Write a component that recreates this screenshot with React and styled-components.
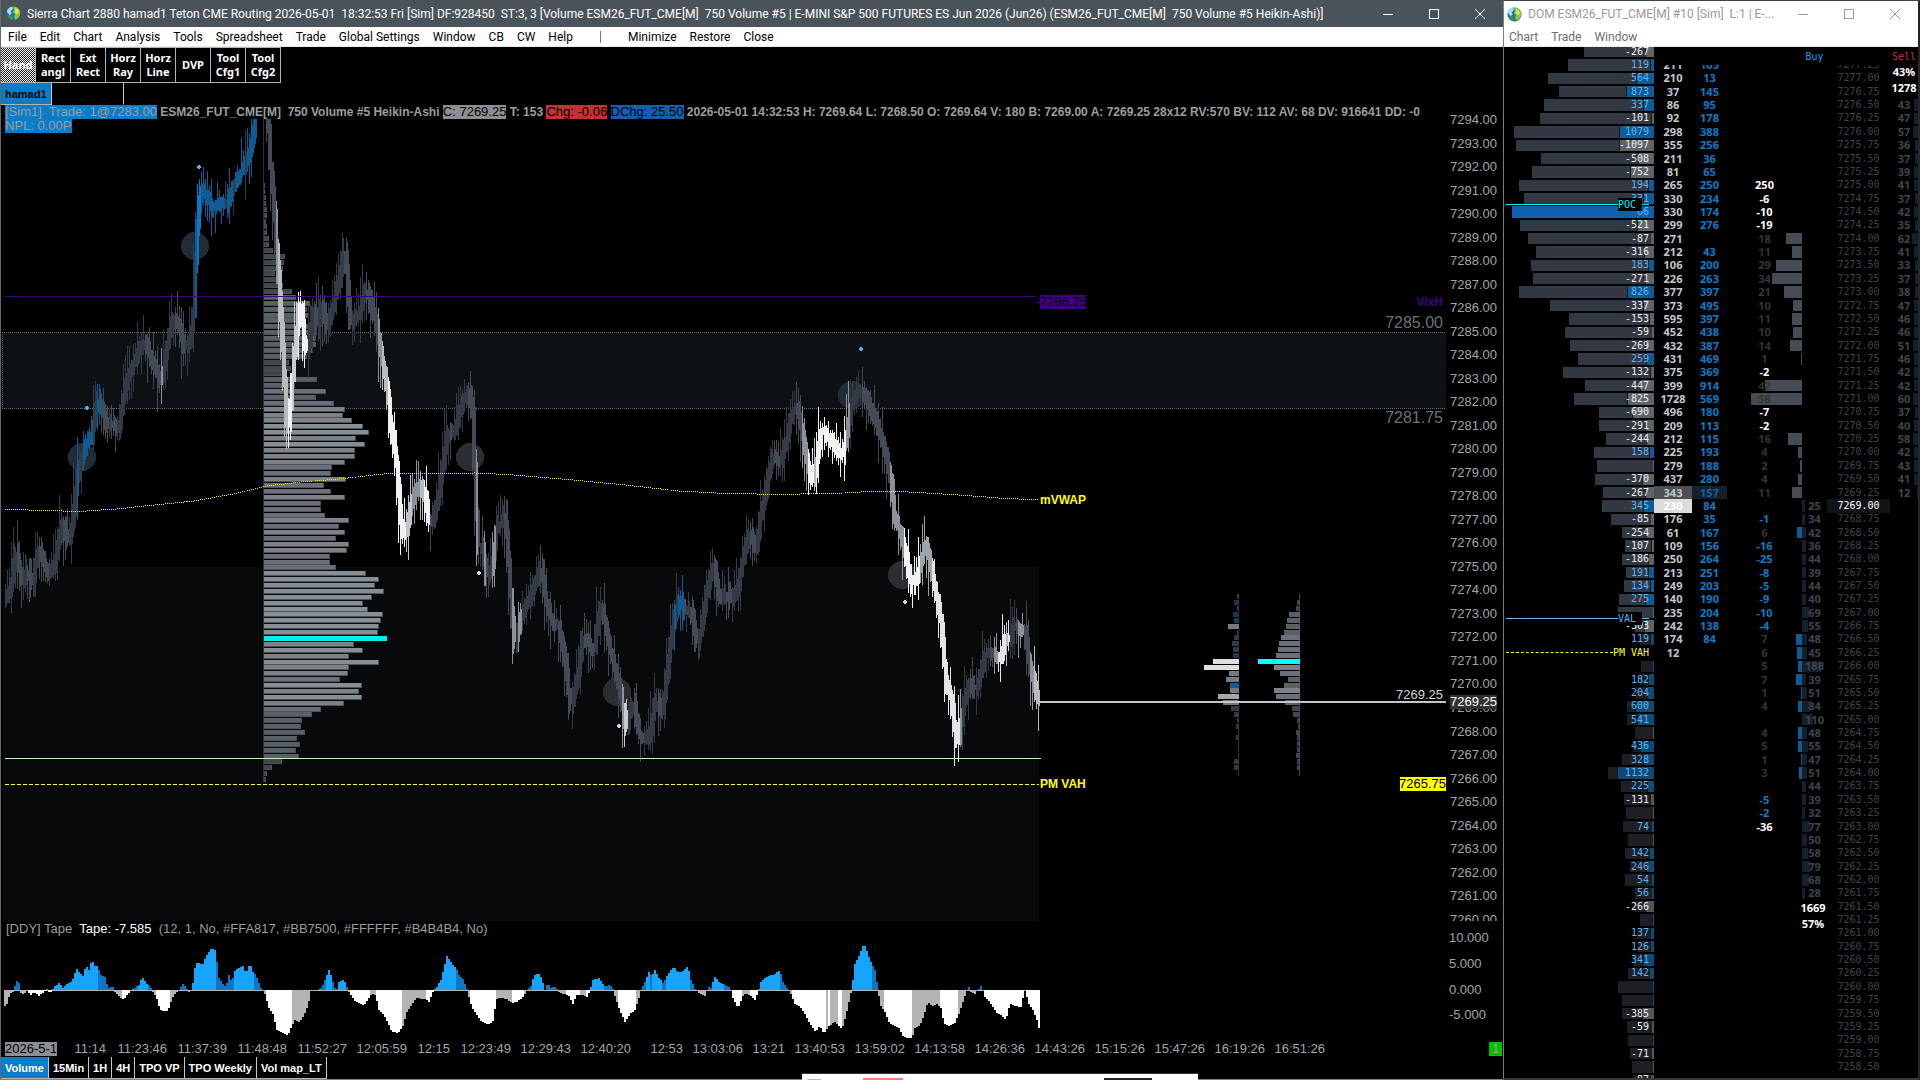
import React from 'react';
import styled, { createGlobalStyle } from 'styled-components';

const GlobalStyle = createGlobalStyle`
    * {
        box-sizing: border-box;
    }
    body {
        margin: 0;
        background: #000;
        overflow: hidden;
    }
    button {
        border: 0;
        margin: 0;
        padding: 0;
        background: none;
        color: inherit;
        font: inherit;
    }
`

const uiFont = '"Noto Sans", "Open Sans", sans-serif';
const titleFont = 'Roboto, "Open Sans", sans-serif';
const chartFont = '"Liberation Sans", Arial, sans-serif';

const Desktop = styled.div`
    display: flex;
    height: 100vh;
    background: #000;
    font-family: ${chartFont};
`

const MainWindow = styled.main`
    flex: 1;
    min-width: 0;
    display: flex;
    flex-direction: column;
    border-left: 1px solid #5f686f;
    border-bottom: 1px solid #7c8288;
`

const DomWindow = styled.aside`
    flex: none;
    width: 417px;
    display: flex;
    flex-direction: column;
    border: 1px solid #6b7076;
    border-width: 1px 2px 2px 1px;
    border-color: #3c444c #23272b #36383a #7a7f84;
`

const TitleBar = styled.header`
    flex: none;
    display: flex;
    align-items: center;
    height: ${({ $light }) => ($light ? 26 : 27)}px;
    padding-left: ${({ $light }) => ($light ? 3 : 5)}px;
    background: ${({ $light }) => ($light ? '#fff' : '#4a5359')};
    color: ${({ $light }) => ($light ? '#999' : '#fff')};
    font: 12px ${titleFont};

    h1 {
        flex: 1;
        min-width: 0;
        margin: 0 0 0 6px;
        font: inherit;
        white-space: pre;
        overflow: hidden;
    }
    svg {
        display: block;
    }
`

const CaptionButton = styled.button`
    display: flex;
    justify-content: center;
    align-items: center;
    width: 46px;
    height: 26px;
`

const MenuBar = styled.nav`
    flex: none;
    display: flex;
    align-items: center;
    height: 20px;
    padding-left: ${({ $light }) => ($light ? 5 : 7)}px;
    gap: 13px;
    background: #fff;
    border-bottom: 1px solid #ececec;
    color: ${({ $light }) => ($light ? '#6a6e78' : '#000')};
    font: 12px ${titleFont};
    line-height: 20px;
`

const MenuDivider = styled.span`
    width: 1px;
    height: 12px;
    margin: 0 14px;
    background: #777;
`

const Toolbar = styled.div`
    flex: none;
    display: flex;
    height: 36px;
`

const ToolButton = styled.button`
    width: 35px;
    border: 1px solid #b4b4b4;
    border-width: 1px 1px 1px 0;
    color: #fff;
    background: ${({ $active }) => ($active
        ? 'repeating-conic-gradient(#fff 0 25%, #202020 0 50%) 0 0 / 2px 2px'
        : '#000')};
    font: bold 11px ${uiFont};
    line-height: 14px;
`

const Tabs = styled.div`
    flex: none;
    display: flex;
    height: 22px;
`

const Tab = styled.button`
    padding: 0 4px;
    border-right: 1px solid #c8c8c8;
    border-bottom: 1px solid ${({ $empty }) => ($empty ? 'transparent' : '#b4b4b4')};
    min-width: ${({ $empty }) => ($empty ? 72 : 21)}px;
    background: ${({ $active }) => ($active ? '#0a7cc8' : '#000')};
    color: ${({ $dark }) => ($dark ? '#000' : '#fff')};
    font: bold 11px ${chartFont};
    white-space: nowrap;
`

const ChartArea = styled.section`
    flex: 1;
    min-height: 0;
    display: flex;
    flex-direction: column;
`

const Pane = styled.div`
    position: relative;
    display: flex;
    flex: ${({ $height }) => ($height ? 'none' : 1)};
    height: ${({ $height }) => ($height ? `${$height}px` : 'auto')};
    min-height: 0;
    overflow: hidden;
`

const Plot = styled.svg`
    flex: 1;
    min-width: 0;
    display: block;
    overflow: hidden;
`

const Scale = styled.svg`
    flex: none;
    width: 57px;
    display: block;
    font: 13px ${chartFont};
    fill: #a2a6aa;
`

const PaneHeader = styled.div`
    position: absolute;
    top: 0;
    left: 0;
    right: 57px;
    padding-left: 4px;
    overflow: hidden;
    background: linear-gradient(#000 14px, transparent 14px);
    color: #9a9ea2;
    font-size: 12px;
    font-weight: bold;
    line-height: 14px;
    white-space: pre;
`

const Tag = styled.span`
    display: inline-block;
    height: 14px;
    background: ${({ $bg }) => $bg};
    color: ${({ $color }) => $color || '#000'};
    font-size: 13px;
    font-weight: normal;
    vertical-align: top;
`

const TapeHeader = styled(PaneHeader)`
    top: 1px;
    padding-left: 5px;
    font-size: 13px;
    font-weight: normal;

    b {
        color: #fff;
        font-weight: normal;
    }
`

const TimeAxis = styled.div`
    flex: none;
    display: flex;
    align-items: center;
    height: 14px;
    margin: 0 1px 1px 4px;
    color: #a2a6aa;
    font-size: 13px;
    line-height: 14px;
`

const TimeLabel = styled.span`
    width: ${({ $w }) => $w}px;
    text-align: right;
`

const PageBadge = styled.span`
    margin-left: auto;
    width: 13px;
    background: #00c000;
    color: #8fae8f;
    text-align: center;
`

const Ladder = styled.section`
    position: relative;
    flex: 1;
    min-height: 0;
    display: flex;
    overflow: hidden;
    background: #000;
`

const Columns = styled.tr`
    flex: 1 1 0;
    min-height: 0;
    display: grid;
    grid-template-columns: 1fr 38px 35px 75px 25px 63px 28px;
`

const LadderTable = styled.table`
    flex: 1;
    display: flex;
    margin: -2px 0 -9px;
    border-spacing: 0;
    font: bold 11px ${uiFont};

    tbody {
        flex: 1;
        display: flex;
        flex-direction: column;
    }
`

const Cell = styled.td`
    position: relative;
    display: flex;
    align-items: center;
    justify-content: center;
    min-width: 0;
    padding: 0;
    line-height: 12px;
    color: ${({ $color }) => $color};
    background: ${({ $bg }) => $bg || 'none'};
    background-clip: content-box;

    span {
        position: relative;
    }
`

const ProfileCell = styled(Cell)`
    justify-content: flex-end;
    padding-right: 5px;
    font: 10px "DejaVu Sans Mono", monospace;
    line-height: 12px;
`

const PriceCell = styled(Cell)`
    font: 10px "DejaVu Sans Mono", monospace;
    line-height: 12px;
`

const Bar = styled.i`
    position: absolute;
    top: 1px;
    bottom: 1px;
    ${({ $side }) => $side || 'right'}: 0;
    width: ${({ $w }) => $w}px;
    background: ${({ $color }) => $color};
    border-left: ${({ $edge }) => ($edge ? '1px solid #15191d' : '0')};
`

const Level = styled.div`
    position: absolute;
    z-index: 2;
    left: 2px;
    right: 5px;
    ${({ $at }) => ($at === 'middle' ? 'top: 0' : 'top: -7px')};
    display: flex;
    align-items: center;
    color: ${({ $color }) => $color};
    line-height: 13px;

    &::before {
        content: '';
        flex: 1;
        border-top: 1px ${({ $dashed }) => ($dashed ? 'dashed' : 'solid')} ${({ $color }) => $color};
    }
    &::after {
        content: '';
        width: ${({ $dashed }) => ($dashed ? 0 : 7)}px;
        border-top: 1px solid ${({ $color }) => $color};
    }
    em {
        min-width: 24px;
        background: #000;
        font-style: normal;
    }
`

const LadderHead = styled.div`
    position: absolute;
    top: 0;
    right: 0;
    width: 264px;
    height: 18px;
    display: grid;
    grid-template-columns: 1fr 25px 63px 28px;
    background: #000;
    font: 10px "DejaVu Sans Mono", monospace;
    line-height: 20px;
    text-align: center;

    .buy {
        color: #1a9af0;
    }
    .sell {
        color: #c83030;
    }
`

const Totals = styled.div`
    position: absolute;
    right: ${({ $right }) => $right}px;
    top: ${({ $top }) => $top}px;
    width: 26px;
    background: #000;
    color: #fff;
    font: bold 11px ${uiFont};
    line-height: 16px;
    text-align: center;
`

const Popup = styled.div`
    position: fixed;
    left: 802px;
    bottom: 0;
    width: 396px;
    height: 7px;
    display: flex;
    align-items: flex-end;
    padding-left: 5px;
    background: #fff;
    border-top: 1px solid #333;
`

const Chip = styled.span`
    width: ${({ $w }) => $w}px;
    height: ${({ $h }) => $h}px;
    margin-right: ${({ $gap }) => $gap}px;
    background: ${({ $color }) => $color};
`

const parse = (text) => text.trim().split(/\s+/).map((pair) => pair.split(',').map(Number));

const pricePath = parse(`
    5,598 10,588 15,548 22,587 27,563 31,590 38,545 44,567 48,577 54,563 62,520 68,547 74,503 76,480
    79,467 86,440 91,438 97,395 104,418 106,430 111,420 118,434 121,408 125,383 131,368 138,350 144,340
    150,357 156,370 160,386 167,343 172,318 178,325 184,350 190,340 194,300 195,260 198,210 200,187
    206,197 213,210 221,203 225,207 230,193 238,177 245,163 250,150 254,123 256,100`);

const pricePath2 = parse(`
    266,100 268,127 270,167 273,200 275,233 278,277 281,333 284,383 286,420 287,438 290,405 292,377
    296,330 299,298 302,325 305,357 309,340 313,300 316,333 321,300 326,330 331,310 337,285 341,265
    344,245 347,280 349,325 354,317 359,313 366,285 371,310 376,325 380,353 384,373 388,400 389,420
    394,450 397,473 399,507 401,537 406,530 410,505 414,493 419,483 424,497 428,517 431,523 436,507
    442,467 447,430 453,437 458,413 463,398 468,392 472,413 474,467 476,517 478,550 481,540 484,560
    486,580 492,563 497,520 501,526 504,507 507,550 511,607 514,650 519,620 523,610 531,593 536,580
    540,565 545,600 553,627 558,623 565,667 570,708 577,677 582,637 588,643 594,650 597,620 601,602
    606,633 612,660 618,683 622,707 625,735 629,710 633,697 637,730 642,742 650,733 655,698 662,713
    666,677 671,633 674,617 679,595 684,613 691,607 696,650 701,627 706,593 713,561 719,603 726,590
    730,603 737,590 743,555 749,531 755,553 760,517 766,487 772,455 779,463 786,440 791,412 797,408
    802,437 807,467 811,485 816,460 820,432 824,433 830,440 836,450 842,457 846,433 850,407 857,392
    862,391 868,404 877,427 884,450 888,467 891,483 893,517 898,527 902,540 906,560 912,590 917,573
    920,563 925,540 929,563 935,590 940,620 943,653 946,687 951,700 954,727 957,750 960,723 964,700
    969,680 974,693 979,680 984,655 990,653 996,657 1001,657 1005,635 1009,645 1013,620 1019,630
    1025,633 1029,667 1034,687 1039,702`);

// colour of the bars up to each x
const barColors = [
    [75, null], [78, '#0e5c96'], [82, null], [92, '#0e5c96'], [95, null], [100, '#0e5c96'], [159, null],
    [161, '#8c9298'], [194, null], [196, '#0e5c96'], [200, '#0a78c8'], [224, '#0e5c96'], [226, null],
    [232, '#0e5c96'], [234, null], [243, '#0e5c96'], [246, null], [258, '#0e5c96'], [274, null],
    [277, '#8c9298'], [283, '#b8bcbe'], [286, '#b8bcbe'], [291, '#f2f2f2'], [296, '#c8ccce'], [306, '#f2f2f2'],
    [377, null], [381, '#8c9298'], [386, '#b8bcbe'], [404, '#f2f2f2'], [411, '#c0c4c6'], [418, '#8c9298'],
    [422, '#b8bcbe'], [429, '#f2f2f2'], [474, null], [477, '#8c9298'], [482, null], [485, '#8c9298'],
    [491, null], [494, '#8c9298'], [510, null], [514, '#8c9298'], [517, null], [520, '#8c9298'],
    [620, null], [623, '#8c9298'], [626, '#c8ccce'], [672, null], [675, '#0e5c96'], [677, null],
    [682, '#0e5c96'], [801, null], [807, '#8c9298'], [812, '#f2f2f2'], [814, '#b8bcbe'], [844, '#f2f2f2'],
    [848, '#8c9298'], [889, null], [902, '#8c9298'], [918, '#f2f2f2'], [930, '#9ea4a8'],
    [958, '#e4e5e6'], [961, '#8c9298'], [992, null], [996, '#8c9298'], [1004, '#e4e5e6'], [1007, '#b8bcbe'],
    [1009, '#e4e5e6'], [1017, null], [1022, '#8c9298'], [1028, null], [1032, '#8c9298'], [1050, '#b8bcbe'],
];

const tapePath = parse(`
    4,-16 6,-14 9,-4 13,-1 14,4 17,11 19,3 20,-3 23,-4 26,-1 30,-5 33,-2 38,-6 42,-3 46,1 49,-4 53,3
    58,7 62,2 66,6 70,8 73,12 75,22 78,18 82,14 85,25 88,20 91,30 94,24 97,24 99,16 104,13 107,2 112,3
    114,-2 118,-6 123,-10 127,-4 130,0 134,2 138,5 141,13 145,7 149,4 152,-2 156,-9 159,-20 163,-21
    167,-21 170,-12 173,-5 178,0 182,6 186,1 189,-3 191,0 194,22 196,27 202,26 205,34 208,38 211,42
    214,40 216,28 218,12 222,6 225,3 228,15 231,8 234,19 238,22 242,24 245,16 249,27 252,18 255,15
    258,7 261,0 264,-4 268,-18 272,-24 276,-40 281,-42 287,-46 290,-38 294,-30 298,-32 303,-26 307,-16
    310,0 315,0 321,2 325,13 328,20 331,13 333,3 336,1 338,8 343,10 346,3 349,-4 353,-10 358,-13
    363,-16 367,-10 371,-3 375,-6 378,-20 382,-24 386,-31 391,-42 397,-43 402,-36 406,-22 411,-14
    416,-8 420,-9 424,-9 428,-12 432,-2 436,3 440,10 443,22 446,34 449,29 452,25 455,22 458,15 462,11
    465,4 467,-3 471,-18 475,-24 481,-32 485,-34 489,-34 493,-30 495,-9 500,-8 506,-9 511,-13 516,-12
    521,-8 526,-1 530,4 533,14 537,17 541,11 544,0 547,7 550,2 554,3 558,-2 563,-4 568,-6 572,-14
    576,-5 581,-5 587,-7 589,0 592,10 598,12 601,7 604,4 609,5 612,1 614,-6 618,-18 624,-32 629,-24
    634,-20 638,-8 641,2 645,10 648,18 651,14 654,20 658,12 662,7 665,12 669,19 673,23 677,18 681,18
    687,24 690,10 694,1 699,-4 705,-7 707,4 710,2 714,13 719,7 724,5 729,2 732,-8 737,-18 742,-6
    745,-3 750,-6 754,-10 757,-2 760,8 764,12 769,15 773,15 779,20 782,8 786,2 789,-2 794,-14 799,-16
    804,-24 809,-34 815,-42 819,-36 823,-44 828,-36 834,-32 841,-39 845,-26 849,-8 851,2 854,26 859,36
    863,47 867,36 870,28 874,20 877,2 879,-15 884,-22 888,-32 893,-36 898,-38 902,-46 906,-48 911,-48
    914,-38 919,-36 923,-26 927,-12 931,-16 936,-14 940,-18 943,-33 948,-36 954,-33 958,-24 962,-12
    966,-1 967,5 970,-2 974,-4 978,1 981,5 983,-6 989,-12 995,-22 1000,-25 1005,-30 1009,-14 1014,-16
    1020,-17 1024,0 1028,-14 1032,-20 1036,-30 1038,-38`);

const fadedTape = [
    [4, 28], [98, 122], [134, 138], [147, 155], [169, 192], [216, 233], [253, 266], [292, 325], [332, 338],
    [346, 350], [370, 376], [402, 426], [456, 470], [495, 511], [524, 532], [543, 566], [580, 586],
    [604, 617], [636, 646], [650, 652], [662, 665], [690, 712], [724, 732], [741, 750], [779, 792],
    [826, 828], [830, 837], [842, 851], [872, 883], [912, 940], [957, 983],
];

const vwap = `5,509 29,510 63,511 87,511 116,509 145,506 194,501 233,494 267,486 301,482 339,479 383,474
    402,473 422,474 475,473 514,475 562,479 625,485 679,491 717,493 756,494 800,494 844,493 879,491
    909,492 959,495 999,498 1038,500`;

const volumeProfile = [
    0, 0, 1, 1, 2, 2, 1, 2, 2, 4, 4, 8, 20, 19, 18, 10, 13, 18, 27, 31, 45, 42, 43, 41, 43, 52, 50, 51, 48, 42,
    24, 26, 22, 52, 30, 61, 51, 69, 80, 78, 87, 98, 104, 91, 100, 90, 90, 80, 67, 66, 81, 59, 66, 80, 56, 56,
    60, 84, 74, 80, 71, 84, 82, 65, 65, 71, 101, 114, 110, 119, 107, 98, 103, 118, 116, 114, 113, 122, 89, 98,
    84, 114, 84, 83, 75, 97, 94, 97, 79, 56, 47, 37, 36, 40, 32, 35, 31, 34, 17, 7, 2, 1,
];

const sessionProfile = [
    1, 3, 4, 11, 13, 14, 16, 19, 21, 22, 24, 42, 26, 20, 12, 16, 26, 24, 15, 8, 7, 3, 2, 4, 3, 3, 3, 4, 3, 3, 1,
];

const deltaProfile = [
    [2], [5, 'b'], [2], [6, 'b'], [5, 'b'], [11, 'g'], [2], [5], [7], [6], [6, 'b'], [26, 'w'], [35, 'w'],
    [10, 'g'], [13, 'g'], [9, 'B'], [9, 'g'], [21, 'l'], [16, 'g'], [8], [5], [2], [3], [1], [3], [1], [1],
    [1], [5], [5], [1],
];

const deltaColors = { b: '#153a58', g: '#737981', w: '#dedfe0', B: '#0e5c96', l: '#a4a6a8' };

const zones = [[82, 457], [195, 246], [470, 457], [617, 692], [852, 395], [902, 575]];
const marks = [[87, 408, 1], [199, 167, 1], [861, 349, 1], [479, 573], [619, 726], [905, 602]];

const tick = 588 / 100;
const priceY = (price) => 119 + (7294 - price) * 4 * tick;

const at = (path, x) => {
    const i = path.findIndex(([px]) => px >= x);
    if (i === -1) return path[path.length - 1][1];
    if (i === 0) return path[0][1];
    const [x0, y0] = path[i - 1];
    const [x1, y1] = path[i];
    return y0 + ((y1 - y0) * (x - x0)) / (x1 - x0);
}

const noise = (n) => {
    const v = Math.sin(n * 127.1) * 43758.5453;
    return v - Math.floor(v);
}

function PriceBars({ path }) {
    const from = path[0][0];
    const to = path[path.length - 1][0];
    const bars = [];
    for (let x = from; x <= to; x += 2) {
        const a = at(path, x - 2);
        const b = at(path, x + 2);
        const top = Math.round(Math.min(a, b) - 2 - noise(x) * 6);
        const bottom = Math.round(Math.max(a, b) + 2 + noise(x + 0.5) * 6);
        const high = Math.round(top - noise(x + 7) ** 1.5 * 25);
        const low = Math.round(bottom + noise(x + 3) ** 1.5 * 25);
        const dark = a > b ? '#343b46' : '#444a56';
        const color = (barColors.find(([limit]) => x <= limit) || [])[1] || dark;
        bars.push(
            <g key={x} fill={color}>
                <rect x={x} y={high} width="1" height={low - high} />
                <rect x={x} y={top} width="2" height={bottom - top} />
            </g>
        );
    }
    return <g>{bars}</g>
}

const profileColor = (w) => {
    if (w > 96) return '#878f96';
    if (w > 76) return '#7c8286';
    if (w > 55) return '#6b6f7c';
    if (w > 28) return '#5a6166';
    return '#40464c';
}

function PricePlot() {
    return (
        <Plot shapeRendering="crispEdges" fontFamily={chartFont} role="img" aria-label="ESM26 price chart">
            <g transform="translate(-1 -105)">
                <rect x="3" y="567" width="1036" height="400" fill="#08090b" />
            </g>
            <g transform="translate(0 -105)">
                <rect x="1" y="332" width="100%" height="76" fill="#0d1114" />
                <path d="M1.5 332V408" stroke="#6a6e78" strokeDasharray="1 1" />
                <line x1="1" x2="100%" y1="332.5" y2="332.5" stroke="#6a6e78" strokeDasharray="1 1" />
                <line x1="1" x2="100%" y1="408.5" y2="408.5" stroke="#6a6e78" strokeDasharray="1 1" />
            </g>
            <g transform="translate(-1 -105)">
                <rect x="263" y="119" width="1" height="664" fill="#2c3034" />
                {volumeProfile.map((w, i) => {
                    const y = Math.round(638 + (i - 77) * tick - 2);
                    const poc = i === 77;
                    return (
                        <g key={i}>
                            <rect x="264" y={y} width={w + 1} height="5" fill={poc ? '#00f0f0' : '#4c5258'} />
                            <rect x="264" y={y} width={w} height="4" fill={poc ? '#00f0f0' : profileColor(w)} />
                        </g>
                    );
                })}
                {zones.map(([x, y]) => (
                    <circle key={x} cx={x} cy={y} r="14" fill={x < 200 || x === 852 ? '#222b36' : '#2b2d30'} />
                ))}
                <PriceBars path={pricePath} />
                <PriceBars path={pricePath2} />
                {marks.map(([x, y, up]) => (
                    <path key={x} d={`M${x - 2} ${y - 1}h1v-1h2v1h1v2h-1v1h-2v-1h-1z`} fill={up ? '#5ab4f5' : '#d8d8d8'} />
                ))}
                <rect x="5" y="296" width="1030" height="1" fill="#43007e" />
                <polyline points={vwap} fill="none" stroke="#f0f000" strokeDasharray="1 1" />
                <rect x="5" y="758" width="1036" height="1" fill="#b8f8b8" />
                <line x1="5" x2="1039" y1="784.5" y2="784.5" stroke="#ffff00" strokeDasharray="4 2" />
                {deltaProfile.map(([w, c], i) => (
                    <rect key={i} x={1239 - w} y={Math.round(662 + (i - 11) * tick) - 3} width={w} height="5" fill={deltaColors[c] || '#333a44'} />
                ))}
                <rect x="1299" y="594" width="1" height="181" fill="#3c4248" />
                {sessionProfile.map((w, i) => (
                    <rect key={i} x={1300 - w} y={Math.round(662 + (i - 11) * tick) - 3} width={w} height="5" fill={i === 11 ? '#00ffff' : profileColor(w * 3)} />
                ))}
                <rect x="1036" y="302" width="4" height="1" fill="#43007e" />
                <rect x="1040" y="295" width="46" height="14" fill="#43007e" />
                <text x="1040" y="306" fontSize="13">7286.25</text>
                <g fill="#ffff00" fontSize="12" fontWeight="bold">
                    <text x="1040" y="504">mVWAP</text>
                    <text x="1040" y="788">PM VAH</text>
                </g>
            </g>
            <g transform="translate(0 -105)" textAnchor="end" fontSize="13">
                <svg x="1038" y="0" width="100%" height="1000">
                    <rect y="701" width="100%" height="2" fill="#c4c6c8" />
                </svg>
                <text x="100%" dx="-3" y="306" fill="#43007e" fontSize="12" fontWeight="bold">VixH</text>
                <text x="100%" dx="-3" y="328" fill="#6c7078" fontSize="16">7285.00</text>
                <text x="100%" dx="-3" y="423" fill="#6c7078" fontSize="16">7281.75</text>
                <text x="100%" dx="-3" y="699" fill="#d0d2d4">7269.25</text>
                <svg x="100%" y="777" width="46" height="14" overflow="visible">
                    <rect x="-46" width="46" height="14" fill="#ffff00" />
                    <text y="11" fill="#000">7265.75</text>
                </svg>
            </g>
        </Plot>
    )
}

function TapePlot() {
    const bars = [];
    for (let x = 4; x < 1040; x += 2) {
        const h = Math.round(at(tapePath, x));
        const faded = fadedTape.some(([a, b]) => x >= a && x < b);
        const color = h > 0 ? (faded ? '#0a78c0' : '#17a4ff') : (faded ? '#b4b4b4' : '#fff');
        bars.push(<rect key={x} x={x - 1} y={h > 0 ? 69 - h : 69} width="2" height={Math.abs(h)} fill={color} />);
    }
    return (
        <Plot shapeRendering="crispEdges" role="img" aria-label="Tape">
            <rect x="4" y="69" width="1034" height="1" fill="#b4b4b4" />
            {bars}
        </Plot>
    )
}

function PriceScale() {
    const labels = [];
    for (let price = 7294; price >= 7260; price--) {
        labels.push(<text key={price} x="4" y={Math.round(priceY(price)) + 5}>{price.toFixed(2)}</text>);
    }
    return (
        <Scale>
            <g transform="translate(0 -105)">
                {labels}
                <rect x="4" y="695" width="47" height="14" fill="#303234" />
                <text x="4" y="706" fill="#fff">7269.25</text>
            </g>
        </Scale>
    )
}

function Globe() {
    return (
        <svg width="15" height="15" viewBox="0 0 15 15" aria-hidden="true">
            <circle cx="7.5" cy="7.5" r="7" fill="#1c6fae" />
            <path d="M1 6C1 3 4 .8 6.500 .6L7 3 5 5 5.500 8 3.500 9Z" fill="#9fdcf5" />
            <path d="M7 1C11 0 14 3 14.300 7 14 10 12 13 9.500 13.800L8 11 9 8 6.500 6.500 8 4Z" fill="#8cc63a" />
            <path d="M9 2l3 1.500 1 3-2 2-2-2z" fill="#d8e84a" />
            <path d="M3 9l3 1 1 3.500C5 13.500 3 12 2 10z" fill="#4c9a3c" />
        </svg>
    )
}

function CaptionButtons({ color }) {
    return (
        <>
            <CaptionButton aria-label="Minimize">
                <svg width="10" height="10"><path d="M0 5.500H10" stroke={color} /></svg>
            </CaptionButton>
            <CaptionButton aria-label="Maximize">
                <svg width="10" height="10"><rect x="0.5" y="0.5" width="9" height="9" fill="none" stroke={color} /></svg>
            </CaptionButton>
            <CaptionButton aria-label="Close">
                <svg width="10" height="10"><path d="M0 0L10 10M10 0L0 10" stroke={color} /></svg>
            </CaptionButton>
        </>
    )
}

// total volume, delta, bid volume, ask volume, pulled/stacked, resting size; top row is 7277.50
const ladder = [
    [70, -267],
    [86, 119, 211, 105],
    [106, 564, 210, 13],
    [95, 873, 37, 145],
    [110, 337, 86, 95, '', 43],
    [114, -101, 92, 178, '', 47],
    [140, 1079, 298, 388, '', 57],
    [138, -1097, 355, 256, '', 36],
    [113, -508, 211, 36, '', 37],
    [122, -752, 81, 65, '', 39],
    [135, 194, 265, 250, 'total 250', 41],
    [130, 331, 330, 234, -6, 37],
    [142, 66, 330, 174, -10, 42],
    [134, -521, 299, 276, -19, 35],
    [126, -87, 271, '', 18, 62],
    [118, -316, 212, 43, 11, 41],
    [123, 183, 106, 200, 29, 33],
    [121, -271, 226, 263, 34, 37],
    [135, 826, 377, 397, 21, 38],
    [104, -337, 373, 495, 10, 47],
    [85, -153, 595, 397, 11, 46],
    [89, -59, 452, 438, 10, 46],
    [84, -269, 432, 387, 14, 51],
    [76, 259, 431, 469, 1, 46],
    [91, -132, 375, 369, -2, 42],
    [69, -447, 399, 914, 42, 42],
    [80, -825, 1728, 569, 58, 60],
    [55, -690, 496, 180, -7, 37],
    [55, -291, 209, 113, -2, 40],
    [48, -244, 212, 115, 16, 58],
    [60, 158, 225, 193, 4, 42],
    [57, -1, 279, 188, 2, 43],
    [59, -370, 437, 280, 4, 41],
    [51, -267, 343, 157, 11, 12],
    [52, 345, 230, 84, '', 25],
    [43, -85, 176, 35, -1, 34],
    [32, -254, 61, 167, 6, 42],
    [29, -107, 109, 156, -16, 36],
    [32, -186, 250, 264, -25, 44],
    [28, 191, 213, 251, -8, 39],
    [30, 134, 249, 203, -5, 44],
    [35, 275, 140, 190, -9, 40],
    [36, -1, 235, 204, -10, 69],
    [19, -303, 242, 138, -4, 55],
    [14, 119, 174, 84, 7, 48],
    [0, 0, 12, '', 6, 45],
    [13, 1, '', '', 5, 188],
    [14, 182, '', '', 7, 39],
    [18, 204, '', '', 1, 51],
    [27, 600, '', '', 4, 84],
    [27, 541, '', '', '', 110],
    [19, -1, '', '', 4, 48],
    [21, 436, '', '', 5, 55],
    [32, 328, '', '', 1, 47],
    [46, 1132, '', '', 3, 51],
    [33, 225, '', '', '', 44],
    [30, -131, '', '', -5, 39],
    [28, -1, '', '', -2, 32],
    [31, 74, '', '', 'total -36', 77],
    [26, -1, '', '', '', 50],
    [29, 142, '', '', '', 58],
    [24, 246, '', '', '', 79],
    [29, 54, '', '', '', 68],
    [19, 56, '', '', '', 28],
    [20, -266],
    [14, 1],
    [17, 137],
    [16, 126],
    [21, 341],
    [26, 142],
    [36, 1],
    [32, 1],
    [32, -385],
    [27, -59],
    [26, 1],
    [24, -71],
    [22, -1],
    [21, -87],
];

function LadderRow({ row, index }) {
    const [volume, delta, bid, ask, stacked = '', size] = row;
    const price = 7277.5 - index / 4;
    const askSide = price > 7269;
    const inDay = price > 7266.6;
    const total = typeof stacked === 'string' && stacked.startsWith('total');
    const up = delta > 0;
    const deltaColor = up ? (inDay ? '#0e5c96' : '#104a74') : (inDay ? '#5c6468' : '#50565a');
    let volumeColor = inDay ? '#323842' : '#1e1f23';
    if (price === 7274.5) volumeColor = '#1060b0';
    let stackColor = '#343434';
    if (total || (stacked < 0 && askSide)) stackColor = '#fff';
    else if (stacked < 0) stackColor = '#0a7cc8';
    const last = price === 7269;

    return (
        <Columns>
            <ProfileCell $color={up ? '#5ab4f5' : '#f0f0f0'}>
                <Bar $w={volume} $color={volumeColor} />
                {delta !== 0 && <Bar $w={Math.max(1, Math.round(Math.abs(delta) / 31))} $color={deltaColor} $edge={Math.abs(delta) > 90} />}
                <span>{Math.abs(delta) > 1 ? delta : ''}</span>
                {price === 7274.5 && <Level $color="#00f0f0"><em>POC</em></Level>}
                {price === 7266.75 && <Level $color="#5ab4f5"><em>VAL</em></Level>}
                {price === 7266.25 && <Level $color="#ffff00" $dashed $at="middle"><em>PM VAH</em></Level>}
            </ProfileCell>
            <Cell $color={last ? '#fff' : '#c4c8ca'} $bg={last ? '#dcdcdc' : price === 7269.25 ? '#4a5054' : ''}>{bid}</Cell>
            <Cell $color={price === 7269.25 ? '#1060b0' : '#0a7cc8'} $bg={price === 7269.25 ? '#15202c' : ''}>{ask}</Cell>
            <Cell $color={stackColor}>
                {stacked > 0 && <Bar $w={Math.round(stacked * 0.88)} $color={askSide ? '#464c56' : '#0e5c96'} />}
                <span>{total ? stacked.slice(6) : stacked}</span>
            </Cell>
            <Cell $color="#40444c">
                {!askSide && size && <Bar $side="left" $w={Math.round(size / 10)} $color="#16202a" />}
                <span>{askSide ? '' : size}</span>
            </Cell>
            <PriceCell $color={last ? '#fff' : '#40434c'} $bg={last ? '#111416' : ''}>{index > 0 && price > 7258.3 ? price.toFixed(2) : ''}</PriceCell>
            <Cell $color="#40444c">
                {askSide && size && <Bar $w={Math.round(size / 11)} $color="#16202a" />}
                <span>{askSide ? size : ''}</span>
            </Cell>
        </Columns>
    )
}

const menus = ['File', 'Edit', 'Chart', 'Analysis', 'Tools', 'Spreadsheet', 'Trade', 'Global Settings', 'Window', 'CB', 'CW', 'Help'];
const tools = ['Hand', 'Rect angl', 'Ext Rect', 'Horz Ray', 'Horz Line', 'DVP', 'Tool Cfg1', 'Tool Cfg2'];
const books = ['Volume', '15Min', '1H', '4H', 'TPO VP', 'TPO Weekly', 'Vol map_LT'];
const times = [
    ['11:14', 49], ['11:23:46', 61], ['11:37:39', 60], ['11:48:48', 60], ['11:52:27', 60], ['12:05:59', 60],
    ['12:15', 43], ['12:23:49', 61], ['12:29:43', 60], ['12:40:20', 60], ['12:53', 52], ['13:03:06', 60],
    ['13:21', 42], ['13:40:53', 60], ['13:59:02', 60], ['14:13:58', 60], ['14:26:36', 60], ['14:43:26', 60],
    ['15:15:26', 60], ['15:47:26', 60], ['16:19:26', 60], ['16:51:26', 60],
];

function App() {
    return (
        <Desktop>
            <GlobalStyle />
            <MainWindow>
                <TitleBar>
                    <Globe />
                    <h1>{'Sierra Chart 2880 hamad1 Teton CME Routing 2026-05-01  18:32:53 Fri [Sim] DF:928450  ST:3, 3 [Volume ESM26_FUT_CME[M]  750 Volume #5 | E-MINI S&P 500 FUTURES ES Jun 2026 (Jun26) (ESM26_FUT_CME[M]  750 Volume #5 Heikin-Ashi)]'}</h1>
                    <CaptionButtons color="#fff" />
                </TitleBar>
                <MenuBar>
                    {menus.map((name) => <button key={name}>{name}</button>)}
                    <MenuDivider />
                    <button>Minimize</button>
                    <button>Restore</button>
                    <button>Close</button>
                </MenuBar>
                <Toolbar>
                    {tools.map((name) => <ToolButton key={name} $active={name === 'Hand'}>{name}</ToolButton>)}
                </Toolbar>
                <Tabs>
                    <Tab $active $dark>hamad1</Tab>
                    <Tab $empty aria-label="New tab" />
                </Tabs>
                <ChartArea>
                    <Pane>
                        <PricePlot />
                        <PriceScale />
                        <PaneHeader>
                            <Tag $bg="#0a7cc8" $color="#9a9ea2">{'[Sim1]  Trade: 1@7283.00'}</Tag>
                            {' ESM26_FUT_CME[M]  750 Volume #5 Heikin-Ashi '}
                            <Tag $bg="#8c9094">C: 7269.25</Tag>
                            {' T: 153 '}
                            <Tag $bg="#c03430">Chg: -0.06</Tag>
                            {' '}
                            <Tag $bg="#1060b0">DChg: 25.50</Tag>
                            {' 2026-05-01 14:32:53 H: 7269.64 L: 7268.50 O: 7269.64 V: 180 B: 7269.00 A: 7269.25 28x12 RV:570 BV: 112 AV: 68 DV: 916641 DD: -0'}
                            <br />
                            <Tag $bg="#0a7cc8" $color="#9a9ea2">NPL: 0.00P</Tag>
                        </PaneHeader>
                    </Pane>
                    <Pane $height={121}>
                        <TapePlot />
                        <Scale>
                            <text x="3" y="21">10.000</text>
                            <text x="3" y="47">5.000</text>
                            <text x="3" y="73">0.000</text>
                            <text x="3" y="98">-5.000</text>
                        </Scale>
                        <TapeHeader>
                            {'[DDY] Tape  '}
                            <b>Tape: -7.585</b>
                            {'  (12, 1, No, #FFA817, #BB7500, #FFFFFF, #B4B4B4, No)'}
                        </TapeHeader>
                    </Pane>
                    <TimeAxis>
                        <Tag $bg="#8c9094">2026-5-1</Tag>
                        {times.map(([label, w]) => <TimeLabel key={label} $w={w}>{label}</TimeLabel>)}
                        <PageBadge>1</PageBadge>
                    </TimeAxis>
                </ChartArea>
                <Tabs>
                    {books.map((name) => <Tab key={name} $active={name === 'Volume'}>{name}</Tab>)}
                </Tabs>
            </MainWindow>
            <DomWindow>
                <TitleBar $light>
                    <Globe />
                    <h1>{'DOM ESM26_FUT_CME[M] #10 [Sim]  L:1 | E-...'}</h1>
                    <CaptionButtons color="#999" />
                </TitleBar>
                <MenuBar $light>
                    <button>Chart</button>
                    <button>Trade</button>
                    <button>Window</button>
                </MenuBar>
                <Ladder>
                    <LadderTable>
                        <tbody>
                            {ladder.map((row, i) => <LadderRow key={i} row={row} index={i} />)}
                        </tbody>
                    </LadderTable>
                    <LadderHead>
                        <span />
                        <span className="buy">Buy</span>
                        <span />
                        <span className="sell">Sell</span>
                    </LadderHead>
                    <Totals $top={17} $right={1}>43% 1278</Totals>
                    <Totals $top={853} $right={92}>1669 57%</Totals>
                </Ladder>
            </DomWindow>
            <Popup>
                <Chip $w={14} $h={1} $gap={42} $color="#bbb" />
                <Chip $w={40} $h={2} $gap={201} $color="#ff7a7a" />
                <Chip $w={48} $h={2} $gap={0} $color="#222" />
            </Popup>
        </Desktop>
    )
}

export default App;
